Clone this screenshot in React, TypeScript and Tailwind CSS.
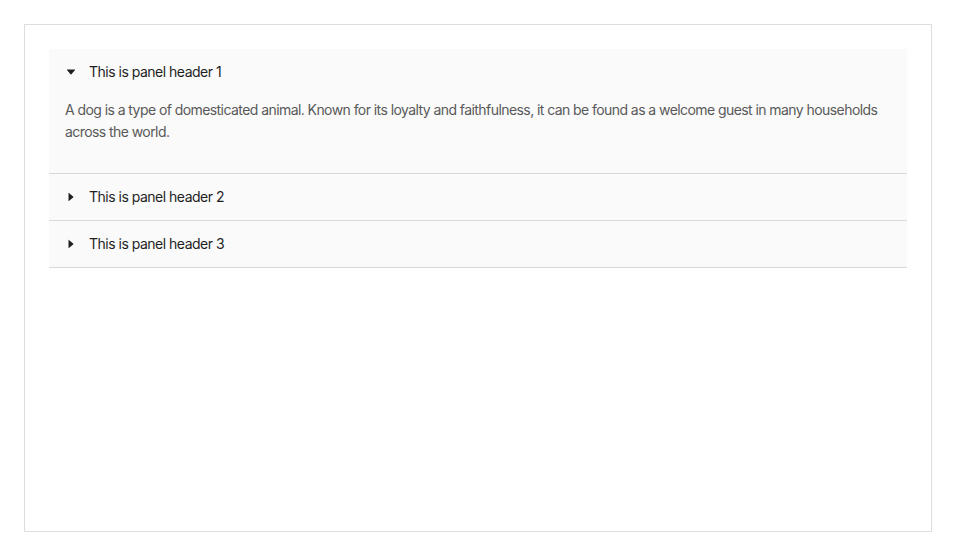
import React, { useState } from "react";

const CaretRight = ({ open }: { open: boolean }) => (
  <svg
    viewBox="0 0 1024 1024"
    width="12"
    height="12"
    fill="currentColor"
    className={open ? "rotate-90" : ""}
  >
    <path d="M715.8 493.5L335 165.1c-14.2-12.2-35-1.2-35 18.5v656.8c0 19.7 20.8 30.7 35 18.5l380.8-328.4c10.9-9.4 10.9-27.6 0-37z" />
  </svg>
);

const text =
  "A dog is a type of domesticated animal. Known for its loyalty and faithfulness, it can be found as a welcome guest in many households across the world.";

export default function App() {
  const [open, setOpen] = useState<number[]>([1]);
  const items = [1, 2, 3];
  const toggle = (i: number) =>
    setOpen((o) => (o.includes(i) ? o.filter((x) => x !== i) : [...o, i]));
  return (
    <div
      className="p-6 bg-white"
      style={{ fontFamily: "Inter, 'Noto Sans', sans-serif" }}
    >
      <div className="h-[508px] border border-[#dedede] p-6">
        <div className="bg-[#fafafa] text-[14px] leading-[22px] tracking-[-0.5px]">
          {items.map((i) => {
            const isOpen = open.includes(i);
            return (
              <div key={i} className="border-b border-[#d9d9d9]">
                <div
                  className="flex items-center px-4 py-3 text-[#1f1f1f] cursor-pointer"
                  onClick={() => toggle(i)}
                >
                  <span className="mr-3 flex items-center text-[#1f1f1f]">
                    <CaretRight open={isOpen} />
                  </span>
                  <span>This is panel header {i}</span>
                </div>
                {isOpen && (
                  <div className="px-4 pt-1 pb-4 text-[#595959] tracking-[-0.57px]">
                    <p className="mb-[14px]">{text}</p>
                  </div>
                )}
              </div>
            );
          })}
        </div>
      </div>
    </div>
  );
}
